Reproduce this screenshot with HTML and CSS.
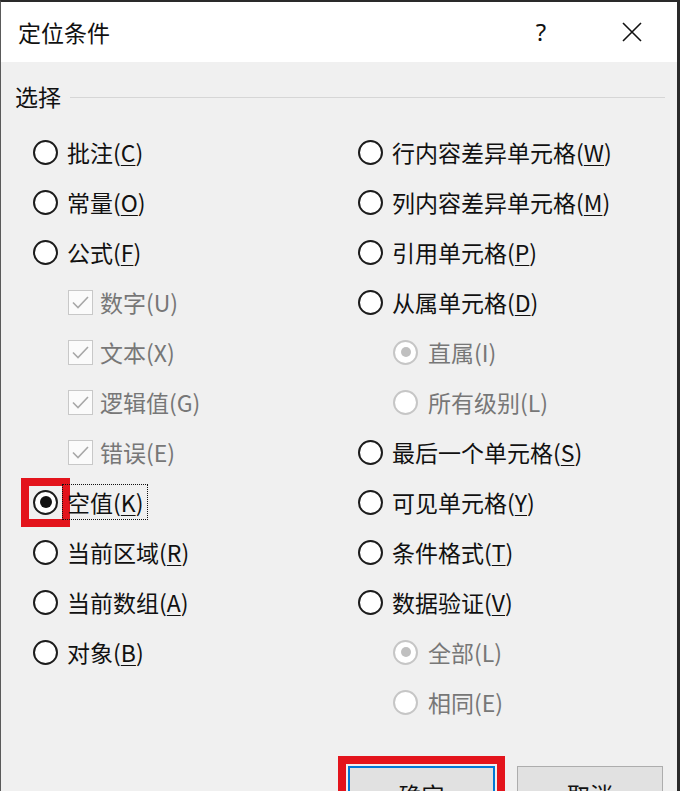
FILE: index.html
```html
<!DOCTYPE html>
<html lang="zh-CN">
<head>
<meta charset="utf-8">
<title>定位条件</title>
<link rel="stylesheet" href="styles.css">
</head>
<body>
<div class="dialog">
  <div class="titlebar">
    <span class="title">定位条件</span>
    <span class="help">?</span>
    <span class="close"><svg width="20" height="20" viewBox="0 0 20 20"><path d="M1 1 L19 19 M19 1 L1 19" stroke="#111" stroke-width="1.6" fill="none"/></svg></span>
  </div>
  <div class="content">
    <div class="group-head"><span class="group-label">选择</span><span class="group-line"></span></div>
    <div class="cols">
      <div class="col">
        <div class="row"><span class="radio"></span><span class="label">批注(<u>C</u>)</span></div>
        <div class="row"><span class="radio"></span><span class="label">常量(<u>O</u>)</span></div>
        <div class="row"><span class="radio"></span><span class="label">公式(<u>F</u>)</span></div>
        <div class="row sub disabled"><span class="check"><svg width="23" height="23" viewBox="0 0 23 23"><path d="M4 11.5 L9 16.5 L19 6" stroke="#a8a8a8" stroke-width="1.6" fill="none"/></svg></span><span class="label">数字(U)</span></div>
        <div class="row sub disabled"><span class="check"><svg width="23" height="23" viewBox="0 0 23 23"><path d="M4 11.5 L9 16.5 L19 6" stroke="#a8a8a8" stroke-width="1.6" fill="none"/></svg></span><span class="label">文本(X)</span></div>
        <div class="row sub disabled"><span class="check"><svg width="23" height="23" viewBox="0 0 23 23"><path d="M4 11.5 L9 16.5 L19 6" stroke="#a8a8a8" stroke-width="1.6" fill="none"/></svg></span><span class="label">逻辑值(G)</span></div>
        <div class="row sub disabled"><span class="check"><svg width="23" height="23" viewBox="0 0 23 23"><path d="M4 11.5 L9 16.5 L19 6" stroke="#a8a8a8" stroke-width="1.6" fill="none"/></svg></span><span class="label">错误(E)</span></div>
        <div class="row"><span class="hl"><span class="radio checked"></span></span><span class="label focus">空值(<u>K</u>)</span></div>
        <div class="row"><span class="radio"></span><span class="label">当前区域(<u>R</u>)</span></div>
        <div class="row"><span class="radio"></span><span class="label">当前数组(<u>A</u>)</span></div>
        <div class="row"><span class="radio"></span><span class="label">对象(<u>B</u>)</span></div>
      </div>
      <div class="col right">
        <div class="row"><span class="radio"></span><span class="label">行内容差异单元格(<u>W</u>)</span></div>
        <div class="row"><span class="radio"></span><span class="label">列内容差异单元格(<u>M</u>)</span></div>
        <div class="row"><span class="radio"></span><span class="label">引用单元格(<u>P</u>)</span></div>
        <div class="row"><span class="radio"></span><span class="label">从属单元格(<u>D</u>)</span></div>
        <div class="row sub disabled"><span class="radio checked"></span><span class="label">直属(I)</span></div>
        <div class="row sub disabled"><span class="radio"></span><span class="label">所有级别(L)</span></div>
        <div class="row"><span class="radio"></span><span class="label">最后一个单元格(<u>S</u>)</span></div>
        <div class="row"><span class="radio"></span><span class="label">可见单元格(<u>Y</u>)</span></div>
        <div class="row"><span class="radio"></span><span class="label">条件格式(<u>T</u>)</span></div>
        <div class="row"><span class="radio"></span><span class="label">数据验证(<u>V</u>)</span></div>
        <div class="row sub disabled"><span class="radio checked"></span><span class="label">全部(L)</span></div>
        <div class="row sub disabled"><span class="radio"></span><span class="label">相同(E)</span></div>
      </div>
    </div>
    <div class="footer">
      <button class="btn primary">确定</button>
      <button class="btn">取消</button>
    </div>
  </div>
</div>
</body>
</html>
```
FILE: styles.css
```css
html, body {
  margin: 0;
  padding: 0;
  background: #2a2a2a;
}
body {
  width: 680px;
  height: 791px;
  overflow: hidden;
  font-family: "Noto Sans CJK SC", "Microsoft YaHei", sans-serif;
  font-size: 23px;
  color: #111;
}
.dialog {
  width: 676px;
  height: 789px;
  border-top: 2px solid #2a2a2a;
  border-left: 1px solid #5a5a5a;
  border-right: 3px solid #2a2a2a;
  background: #f0f0f0;
  overflow: hidden;
}
.titlebar {
  height: 60px;
  background: #ffffff;
  display: flex;
  align-items: center;
}
.title {
  padding-left: 17px;
  line-height: 60px;
  flex: 1;
}
.help {
  width: 20px;
  text-align: center;
  font-size: 24px;
  line-height: 60px;
  font-family: "Noto Sans", "Liberation Sans", sans-serif;
}
.close {
  display: flex;
  margin-left: 71px;
  margin-right: 35px;
}
.content {
  padding-top: 16px;
}
.group-head {
  display: flex;
  align-items: center;
  height: 36px;
  padding-left: 14px;
  padding-right: 12px;
}
.group-label {
  line-height: 36px;
}
.group-line {
  flex: 1;
  height: 1px;
  background: #d6d6d6;
  margin-left: 9px;
  margin-top: 2px;
}
.cols {
  display: grid;
  grid-template-columns: 325px 1fr;
  margin-top: 13px;
  padding-left: 32px;
}
.row {
  height: 50px;
  display: flex;
  align-items: center;
}
.label {
  margin-left: 9px;
  line-height: 30px;
  white-space: nowrap;
}
.row u {
  text-underline-offset: 3px;
  text-decoration-thickness: 1px;
}
.sub {
  padding-left: 35px;
}
.disabled .label {
  color: #777;
}
.radio {
  box-sizing: border-box;
  width: 25px;
  height: 25px;
  border: 2px solid #1c1c1c;
  border-radius: 50%;
  background: #ffffff;
  display: flex;
  align-items: center;
  justify-content: center;
  flex: none;
}
.radio.checked::after {
  content: "";
  width: 12px;
  height: 12px;
  border-radius: 50%;
  background: #111;
}
.disabled .radio {
  border-color: #c6c6c6;
}
.disabled .radio.checked::after {
  width: 10px;
  height: 10px;
  background: #c0c0c0;
}
.check {
  box-sizing: border-box;
  width: 25px;
  height: 25px;
  border: 1px solid #c8c8c8;
  background: #fbfbfb;
  display: flex;
  flex: none;
}
.sub .check + .label {
  margin-left: 7px;
}
.right .sub .label {
  margin-left: 10px;
}
.hl {
  display: flex;
  outline: 8px solid #e3141c;
  outline-offset: 4px;
}
.focus {
  outline: 1px dotted #111;
  outline-offset: 2px;
  padding: 0 2px;
  margin-left: 7px;
}
.footer {
  display: flex;
  justify-content: flex-end;
  gap: 22px;
  margin-top: 39px;
  padding-right: 14px;
}
.btn {
  box-sizing: border-box;
  width: 146px;
  height: 56px;
  background: #e1e1e1;
  border: 1px solid #adadad;
  font-family: "Noto Sans CJK SC", "Microsoft YaHei", sans-serif;
  font-size: 23px;
  color: #111;
  padding: 0;
}
.btn.primary {
  width: 147px;
  border: 2px solid #0078d7;
  outline: 8px solid #e3141c;
  outline-offset: 2px;
}
```
